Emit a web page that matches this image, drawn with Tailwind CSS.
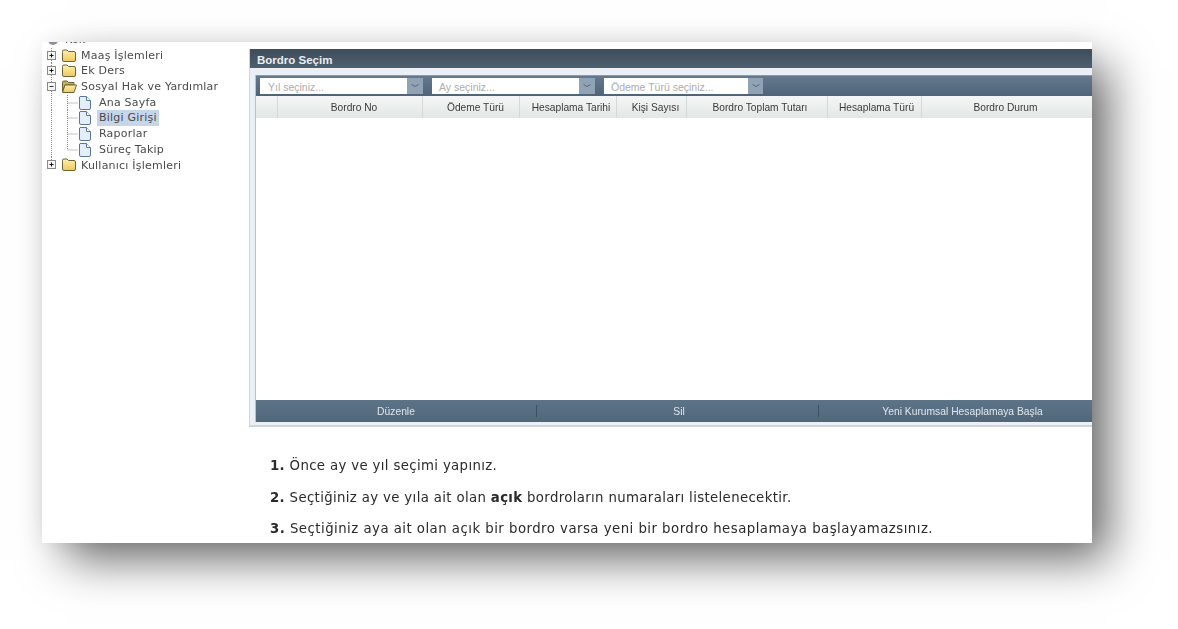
<!DOCTYPE html>
<html lang="tr">
<head>
<meta charset="utf-8">
<script src="https://cdn.jsdelivr.net/npm/@tailwindcss/browser@4"></script>
<title>Bordro Seçim</title>
</head>
<body class="bg-white">
<svg width="0" height="0" class="absolute">
  <defs>
    <linearGradient id="f" x1="0" y1="0" x2="0" y2="1"><stop offset="0" stop-color="#fdf0b0"/><stop offset="1" stop-color="#efc95a"/></linearGradient>
    <g id="folder"><path d="M1.500 4.500 L1.500 3.200 Q1.500 2 3 2 L6 2 L7.500 3.500 L13 3.500 Q14.500 3.500 14.500 5 L14.500 12 Q14.500 13.500 13 13.500 L3 13.500 Q1.500 13.500 1.500 12 Z" fill="url(#f)" stroke="#6f6336" stroke-width="1"/></g>
    <g id="open"><path d="M1.500 12.500 L1.500 3.200 Q1.500 2 3 2 L6 2 L7.500 3.500 L13 3.500 L13 6 L4 6 Z" fill="#c9ad5c" stroke="#6f6336"/><path d="M1.500 13.500 L4 6 L15.500 6 L13 13.500 Z" fill="url(#f)" stroke="#6f6336"/></g>
    <g id="page"><path d="M2 1.500 L8.500 1.500 L12.500 5.500 L12.500 13 Q12.500 14.500 11 14.500 L3 14.500 Q1.500 14.500 1.500 13 L1.500 2 Z" fill="#e4eefa" stroke="#55789f"/><path d="M8.500 1.500 L8.500 5.500 L12.500 5.500" fill="#fff" stroke="#55789f"/></g>
  </defs>
</svg>
<div class="w-[1178px] h-[629px] pt-[42px] pl-[42px] overflow-hidden bg-white">
  <div class="w-[1050px] h-[501px] bg-white overflow-hidden flex shadow-[20px_20px_44px_-4px_rgba(0,0,0,0.6),0_0_20px_rgba(0,0,0,0.05)]">

    <nav class="w-[207px] shrink-0 -mt-[10px] pl-[5px] text-[11px] leading-[15.700px] tracking-[0.22px] text-[#4a4a4a] font-['DejaVu_Sans',sans-serif] blur-[0.4px]">
      <div class="flex items-center h-[15.700px] gap-[5px] pl-[1px]">
        <svg width="10" height="16" viewBox="0 0 10 16"><circle cx="5" cy="8" r="5" fill="#8c8c9c"/></svg>
        <span class="ml-[2px]">Kök</span>
      </div>
      <div class="flex items-center h-[15.700px]">
        <svg width="14" height="16" viewBox="0 0 14 16" class="shrink-0"><path d="M4.500 0V16" stroke="#888" stroke-dasharray="1 1"/><rect x="0.500" y="3.500" width="8" height="8" fill="#f4f4f4" stroke="#8a8a8a"/><path d="M2.500 7.500H6.500M4.500 5.500V9.500" stroke="#111"/></svg>
        <svg width="16" height="16" viewBox="0 0 16 16" class="shrink-0"><use href="#folder"/></svg>
        <span class="ml-[4px]">Maaş İşlemleri</span>
      </div>
      <div class="flex items-center h-[15.700px]">
        <svg width="14" height="16" viewBox="0 0 14 16" class="shrink-0"><path d="M4.500 0V16" stroke="#888" stroke-dasharray="1 1"/><rect x="0.500" y="3.500" width="8" height="8" fill="#f4f4f4" stroke="#8a8a8a"/><path d="M2.500 7.500H6.500M4.500 5.500V9.500" stroke="#111"/></svg>
        <svg width="16" height="16" viewBox="0 0 16 16" class="shrink-0"><use href="#folder"/></svg>
        <span class="ml-[4px]">Ek Ders</span>
      </div>
      <div class="flex items-center h-[15.700px]">
        <svg width="14" height="16" viewBox="0 0 14 16" class="shrink-0"><path d="M4.500 0V16" stroke="#888" stroke-dasharray="1 1"/><rect x="0.500" y="3.500" width="8" height="8" fill="#f4f4f4" stroke="#8a8a8a"/><path d="M2.500 7.500H6.500" stroke="#333"/></svg>
        <svg width="16" height="16" viewBox="0 0 16 16" class="shrink-0"><use href="#open"/></svg>
        <span class="ml-[4px]">Sosyal Hak ve Yardımlar</span>
      </div>
      <div class="flex items-center h-[15.700px]">
        <svg width="31" height="16" viewBox="0 0 31 16" class="shrink-0"><path d="M4.500 0V16M20.500 0V16" stroke="#888" stroke-dasharray="1 1"/><path d="M20.500 8H31" stroke="#888" stroke-dasharray="1 1"/></svg>
        <svg width="14" height="16" viewBox="0 0 14 16" class="shrink-0"><use href="#page"/></svg>
        <span class="ml-[5px] px-[2px]">Ana Sayfa</span>
      </div>
      <div class="flex items-center h-[15.700px]">
        <svg width="31" height="16" viewBox="0 0 31 16" class="shrink-0"><path d="M4.500 0V16M20.500 0V16" stroke="#888" stroke-dasharray="1 1"/><path d="M20.500 8H31" stroke="#888" stroke-dasharray="1 1"/></svg>
        <svg width="14" height="16" viewBox="0 0 14 16" class="shrink-0"><use href="#page"/></svg>
        <span class="ml-[5px] px-[2px] bg-[#c5d5ea]">Bilgi Girişi</span>
      </div>
      <div class="flex items-center h-[15.700px]">
        <svg width="31" height="16" viewBox="0 0 31 16" class="shrink-0"><path d="M4.500 0V16M20.500 0V16" stroke="#888" stroke-dasharray="1 1"/><path d="M20.500 8H31" stroke="#888" stroke-dasharray="1 1"/></svg>
        <svg width="14" height="16" viewBox="0 0 14 16" class="shrink-0"><use href="#page"/></svg>
        <span class="ml-[5px] px-[2px]">Raporlar</span>
      </div>
      <div class="flex items-center h-[15.700px]">
        <svg width="31" height="16" viewBox="0 0 31 16" class="shrink-0"><path d="M4.500 0V16M20.500 0V8H31" fill="none" stroke="#888" stroke-dasharray="1 1"/></svg>
        <svg width="14" height="16" viewBox="0 0 14 16" class="shrink-0"><use href="#page"/></svg>
        <span class="ml-[5px] px-[2px]">Süreç Takip</span>
      </div>
      <div class="flex items-center h-[15.700px]">
        <svg width="14" height="16" viewBox="0 0 14 16" class="shrink-0"><path d="M4.500 0V3" stroke="#888" stroke-dasharray="1 1"/><rect x="0.500" y="3.500" width="8" height="8" fill="#f4f4f4" stroke="#8a8a8a"/><path d="M2.500 7.500H6.500M4.500 5.500V9.500" stroke="#111"/></svg>
        <svg width="16" height="16" viewBox="0 0 16 16" class="shrink-0"><use href="#folder"/></svg>
        <span class="ml-[4px]">Kullanıcı İşlemleri</span>
      </div>
    </nav>

    <main class="flex-1 min-w-0 pt-[7px] blur-[0.4px]">
      <section class="h-[378px] flex flex-col border-b-2 border-l border-[#d0d4d8] bg-[#eaf0f5] font-['Liberation_Sans',sans-serif]">
        <h1 class="h-[19px] shrink-0 px-[7px] bg-gradient-to-b from-[#3e4d5b] to-[#4e5f6e] text-[#e8eef2] text-[11.500px] font-bold leading-[22px]">Bordro Seçim</h1>
        <div class="flex-1 min-h-0 flex flex-col pt-[7px] pb-[3px] pl-[5px]">
          <div class="flex-1 min-h-0 flex flex-col border-l border-[#b8c2cb]">
            <div class="h-[21px] shrink-0 flex items-center pl-[4px] bg-gradient-to-b from-[#64798d] to-[#4f6478] border-t border-[#8b9aa8]">
              <div class="flex w-[163px] h-[16px]">
                <div class="flex-1 bg-white text-[#acacac] text-[10.500px] leading-[18px] pl-[8px]">Yıl seçiniz...</div>
                <div class="w-[16px] bg-[#8fa3b5] flex items-center justify-center"><svg width="10" height="6" viewBox="0 0 10 6"><path d="M1.500 1.500L5 3.500L8.500 1.500" fill="none" stroke="#56687a"/></svg></div>
              </div>
              <div class="flex w-[163px] h-[16px] ml-[9px]">
                <div class="flex-1 bg-white text-[#acacac] text-[10.500px] leading-[18px] pl-[7px]">Ay seçiniz...</div>
                <div class="w-[16px] bg-[#8fa3b5] flex items-center justify-center"><svg width="10" height="6" viewBox="0 0 10 6"><path d="M1.500 1.500L5 3.500L8.500 1.500" fill="none" stroke="#56687a"/></svg></div>
              </div>
              <div class="flex w-[159px] h-[16px] ml-[9px]">
                <div class="flex-1 bg-white text-[#acacac] text-[10.500px] leading-[18px] pl-[7px]">Ödeme Türü seçiniz...</div>
                <div class="w-[15px] bg-[#8fa3b5] flex items-center justify-center"><svg width="10" height="6" viewBox="0 0 10 6"><path d="M1.500 1.500L5 3.500L8.500 1.500" fill="none" stroke="#56687a"/></svg></div>
              </div>
            </div>
            <div class="h-[22px] shrink-0 grid grid-cols-[22px_145px_97px_97px_70px_141px_94px_170px] bg-gradient-to-b from-[#f4f6f5] to-[#e2e8e6] text-[#3a3a3a] text-[10.200px] leading-[24px] text-center">
              <div class="border-r border-[#d3d8d8]"></div>
              <div class="border-r border-[#d3d8d8] pl-[8px]">Bordro No</div>
              <div class="border-r border-[#d3d8d8] pl-[9px]">Ödeme Türü</div>
              <div class="border-r border-[#d3d8d8] pl-[6px]">Hesaplama Tarihi</div>
              <div class="border-r border-[#d3d8d8] pl-[8px]">Kişi Sayısı</div>
              <div class="border-r border-[#d3d8d8] pl-[6px]">Bordro Toplam Tutarı</div>
              <div class="border-r border-[#d3d8d8] pl-[4px]">Hesaplama Türü</div>
              <div class="pr-[3px]">Bordro Durum</div>
            </div>
            <div class="flex-1 bg-white"></div>
            <div class="h-[22px] shrink-0 grid grid-cols-[281px_282px_273px] bg-gradient-to-b from-[#5d7488] to-[#516679] text-[#dfe6ec] text-[10.300px] leading-[24px] text-center">
              <div class="border-r border-[#3f4f5e] h-[12px] mt-[5px] leading-[14px]">Düzenle</div>
              <div class="border-r border-[#3f4f5e] h-[12px] mt-[5px] leading-[14px] pl-[3px]">Sil</div>
              <div class="pl-[14px]">Yeni Kurumsal Hesaplamaya Başla</div>
            </div>
          </div>
        </div>
      </section>
      <div class="pt-[29px] pl-[21px] text-[13.300px] tracking-[0.35px] leading-[20px] text-[#2a2a2a] font-['DejaVu_Sans',sans-serif] flex flex-col gap-[11.500px]">
        <p><b>1.</b> Önce ay ve yıl seçimi yapınız.</p>
        <p><b>2.</b> Seçtiğiniz ay ve yıla ait olan <b>açık</b> bordroların numaraları listelenecektir.</p>
        <p class="tracking-[0.47px]"><b>3.</b> Seçtiğiniz aya ait olan açık bir bordro varsa yeni bir bordro hesaplamaya başlayamazsınız.</p>
      </div>
    </main>
  </div>
</div>
</body>
</html>
